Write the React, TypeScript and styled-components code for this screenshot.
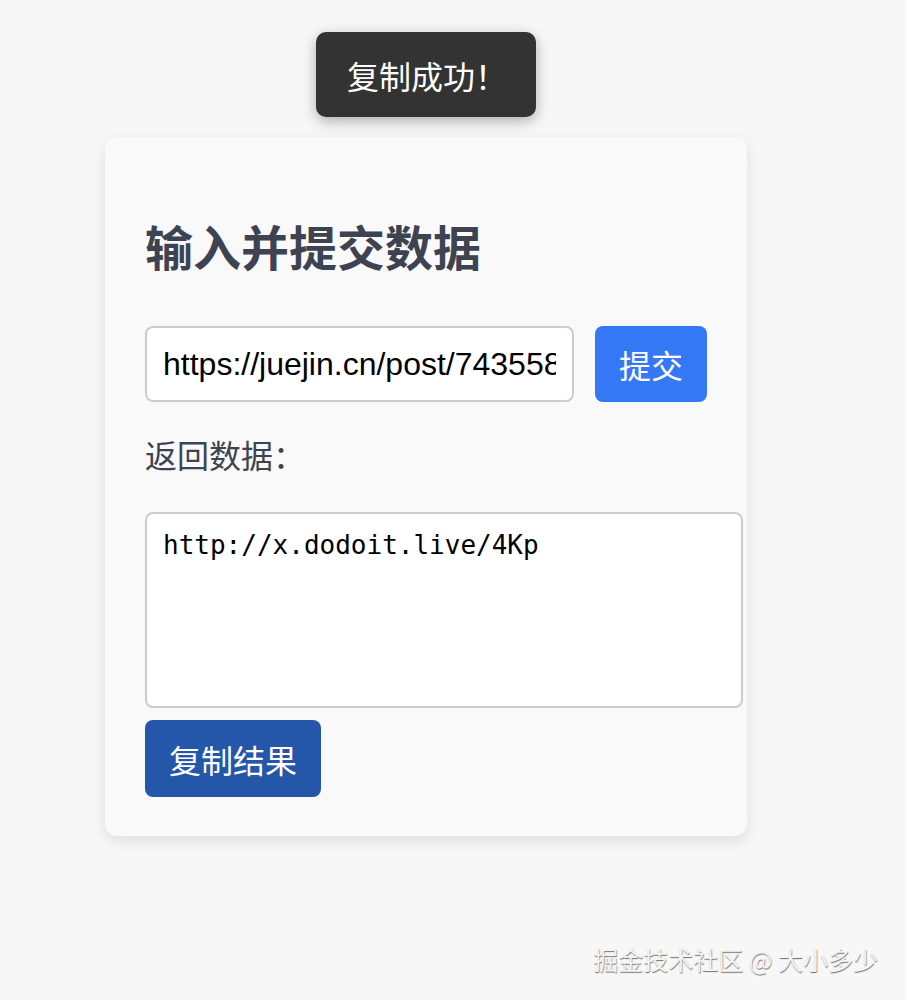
import React, { useState } from "react";
import styled, { createGlobalStyle } from "styled-components";

const GlobalStyle = createGlobalStyle`
  html, body {
    margin: 0;
    padding: 0;
    background: #f7f7f7;
  }
  body {
    font-family: "Noto Sans CJK SC", "Noto Sans", sans-serif;
    min-height: 1000px;
  }
`;

const Page = styled.div`
  position: relative;
  width: 906px;
  height: 1000px;
  overflow: hidden;
  padding-top: 137px;
  box-sizing: border-box;
`;

const Toast = styled.div`
  position: absolute;
  top: 32px;
  left: 316px;
  width: 220px;
  height: 85px;
  box-sizing: border-box;
  display: flex;
  align-items: center;
  padding-left: 31px;
  background: #333333;
  color: #ffffff;
  border-radius: 10px;
  box-shadow: 0 4px 14px rgba(0, 0, 0, 0.3);
  font-family: "Noto Sans CJK SC", sans-serif;
  font-size: 32px;
  z-index: 10;
`;

const Card = styled.section`
  width: 642px;
  margin-left: 105px;
  box-sizing: border-box;
  padding: 73px 40px 39px;
  background: #f9f9fa;
  border-radius: 12px;
  box-shadow: 0 5px 14px rgba(0, 0, 0, 0.1);
`;

const Title = styled.h2`
  margin: 0 0 46px;
  font-family: "Noto Sans CJK SC", sans-serif;
  font-size: 48px;
  font-weight: 700;
  line-height: 70px;
  color: #3d4350;
`;

const Row = styled.div`
  display: flex;
  gap: 21px;
  align-items: stretch;
`;

const TextInput = styled.input`
  width: 429px;
  height: 76px;
  box-sizing: border-box;
  padding: 0 16px;
  border: 2px solid #cccccc;
  border-radius: 8px;
  background: #ffffff;
  font-family: "Liberation Sans", Arial, sans-serif;
  font-size: 32px;
  color: #000000;
  outline: none;
`;

const Button = styled.button<{ $tone: "primary" | "dark" }>`
  height: ${(p) => (p.$tone === "primary" ? "76px" : "77px")};
  padding: 0 24px;
  border: none;
  border-radius: 8px;
  background: ${(p) => (p.$tone === "primary" ? "#3478f6" : "#2456aa")};
  color: #ffffff;
  font-family: "Noto Sans CJK SC", sans-serif;
  font-size: 32px;
  cursor: pointer;
  flex: none;
`;

const Label = styled.p`
  margin: 29px 0 35px;
  font-family: "Noto Sans CJK SC", sans-serif;
  font-size: 32px;
  line-height: 46px;
  color: #3d4350;
`;

const Output = styled.textarea`
  display: block;
  width: 100%;
  height: 160px;
  box-sizing: content-box;
  padding: 16px;
  margin: 0 0 12px;
  border: 2px solid #cccccc;
  border-radius: 8px;
  background: #ffffff;
  font-family: "DejaVu Sans Mono", monospace;
  font-size: 26px;
  line-height: 1.2;
  color: #000000;
  resize: none;
  outline: none;
`;

const Watermark = styled.div`
  position: absolute;
  right: 28px;
  bottom: 24px;
  font-family: "Noto Sans CJK SC", sans-serif;
  font-size: 25px;
  line-height: 34px;
  color: #f4f4f4;
  text-shadow: 0.5px 1px 1px rgba(0, 0, 0, 0.55);
`;

export default function App() {
  const [url, setUrl] = useState("https://juejin.cn/post/7435580712345678901");
  const [result, setResult] = useState("http://x.dodoit.live/4Kp");
  return (
    <>
      <GlobalStyle />
      <Page>
        <Toast>复制成功！</Toast>
        <Card>
          <Title>输入并提交数据</Title>
          <Row>
            <TextInput value={url} onChange={(e) => setUrl(e.target.value)} />
            <Button $tone="primary">提交</Button>
          </Row>
          <Label>返回数据：</Label>
          <Output value={result} onChange={(e) => setResult(e.target.value)} />
          <Button $tone="dark">复制结果</Button>
        </Card>
        <Watermark>掘金技术社区 @ 大小多少</Watermark>
      </Page>
    </>
  );
}
